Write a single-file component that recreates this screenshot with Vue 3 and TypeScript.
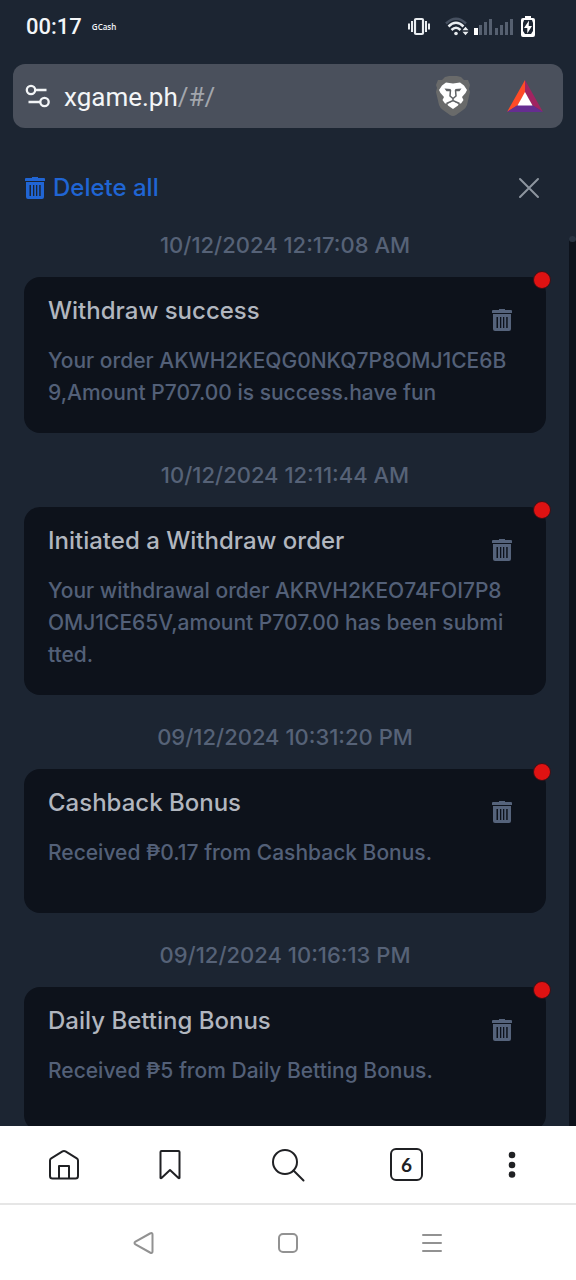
<script setup lang="ts">
interface Notice {
  id: number
  time: string
  title: string
  lines: string[]
}

const notices: Notice[] = [
  {
    id: 1,
    time: '10/12/2024 12:17:08 AM',
    title: 'Withdraw success',
    lines: ['Your order AKWH2KEQG0NKQ7P8OMJ1CE6B', '9,Amount P707.00 is success.have fun'],
  },
  {
    id: 2,
    time: '10/12/2024 12:11:44 AM',
    title: 'Initiated a Withdraw order',
    lines: ['Your withdrawal order AKRVH2KEO74FOI7P8', 'OMJ1CE65V,amount P707.00 has been submi', 'tted.'],
  },
  {
    id: 3,
    time: '09/12/2024 10:31:20 PM',
    title: 'Cashback Bonus',
    lines: ['Received ₱0.17 from Cashback Bonus.'],
  },
  {
    id: 4,
    time: '09/12/2024 10:16:13 PM',
    title: 'Daily Betting Bonus',
    lines: ['Received ₱5 from Daily Betting Bonus.'],
  },
]
</script>

<template>
  <div class="screen">
    <header class="status">
      <time class="clock">00:17</time>
      <span class="carrier">GCash</span>
      <div class="status-icons">
        <svg class="vibrate" width="24" height="20" viewBox="0 0 24 20" fill="none" stroke="#e9edf0">
          <rect x="8" y="2" width="8" height="15" rx="1" stroke-width="2.200" />
          <path d="M5 4v11M19 4v11" stroke-width="2" />
          <path d="M2 6.500v6M22 6.500v6" stroke-width="2" />
        </svg>
        <svg width="24" height="20" viewBox="0 0 24 20" fill="none">
          <path d="M1 6.500Q11 -3 21 6.500" stroke="#465060" stroke-width="2.500" />
          <path d="M3.500 9.500Q11 2 18.500 9.500M6.500 13Q11 8.500 15.500 13" stroke="#e9edf0" stroke-width="2.500" />
          <circle cx="11" cy="16.500" r="1.800" fill="#e9edf0" />
          <path d="M17.500 13.200l3-3.400 3 3.400zM17.500 14.800l3 3.400 3-3.400z" fill="#e9edf0" />
        </svg>
        <svg width="42" height="20" viewBox="0 0 42 20" fill="#566070">
          <path d="M1 11h4v7H1z" fill="#fff" />
          <path d="M6 8h3v10H6zM11 5h3v13h-3zM16 2h3v16h-3zM22 11h3v7h-3zM27 8h3v10h-3zM32 5h3v13h-3zM37 2h3v16h-3z" />
        </svg>
        <svg class="battery" width="14" height="22" viewBox="0 0 14 22">
          <path d="M4 0h6v2h2q2 0 2 2v15q0 2-2 2H2q-2 0-2-2V4q0-2 2-2h2z" fill="#fff" />
          <path d="M3 4h8l1 3v8l-2 3H4l-2-3V7z" fill="#1c2532" />
          <path d="M8 4.500L3 12h3.300v5.500L11 10H7.700z" fill="#fff" />
        </svg>
      </div>
    </header>

    <nav class="address" aria-label="Address">
      <button class="icon-button" type="button" aria-label="Site settings">
        <svg width="26" height="24" viewBox="0 0 26 24" fill="none" stroke="#f3f5f7" stroke-width="2.300">
          <circle cx="6" cy="6" r="4.200" />
          <path d="M10.500 6h11M3.500 18H15" />
          <circle cx="19.500" cy="18" r="4.200" />
        </svg>
      </button>
      <a class="url" href="#/">xgame.ph<span class="path">/#/</span></a>
      <button class="icon-button shields" type="button" aria-label="Shields">
        <svg width="36" height="42" viewBox="0 0 36 42">
          <path d="M10 2l4-1h8l4 1 3 3 4 0 2 5-1 4 1 3-3 13q-1 3-4 5l-7 5q-3 2-6 0l-7-5q-3-2-4-5L1 17l1-4-1-3 2-5h4z" fill="#696a6a" />
          <path d="M11 7.500l7 1 7-1 4 3 3 4.500-1.500 3-3.500 4 1.500 3-2.500 3.500h-3l-5-2.500-5 2.500h-3L7.500 25 9 22l-3.500-4L4 15l3-4.500z" fill="#fff" />
          <path d="M12.500 29l5.500-3 5.500 3-.5 1.500-5 3.500-5-3.500z" fill="#fff" />
          <path d="M9.500 13.500l6.500.5-1 2.200h-3.500zM26.500 13.500l-6.500.5 1 2.200h3.500z" fill="#5f6265" />
          <path d="M15.500 15l-.5 6 3 2.500 3-2.500-.5-6M18 23.500V26M11.500 28.500l6.500-3 6.500 3" fill="none" stroke="#5f6265" stroke-width="1.500" />
        </svg>
      </button>
      <button class="icon-button" type="button" aria-label="Rewards">
        <svg width="36" height="32" viewBox="0 0 36 32">
          <path d="M18 0v13l-7 12L0 32z" fill="#ff4b27" />
          <path d="M18 0l18 32-11-7-7-12z" fill="#a12461" />
          <path d="M0 32l11-7h14l11 7z" fill="#662d91" />
          <path d="M18 12l7.500 13.500h-15z" fill="#fff" />
        </svg>
      </button>
    </nav>

    <main class="panel">
      <div class="toolbar">
        <button class="delete-all" type="button">
          <svg width="20" height="24" viewBox="0 0 20 24">
            <path d="M7 1h6v1h6q1 0 1 1v2H0V3q0-1 1-1h6z" />
            <path fill-rule="evenodd" d="M1 6h18v15q0 2-2 2H3q-2 0-2-2zM4.500 9v11H6V9zM8 9v11h1.300V9zM11 9v11h1.300V9zM14.200 9v11h1.500V9z" />
          </svg>
          Delete all
        </button>
        <button class="close" type="button" aria-label="Close">
          <svg width="22" height="22" viewBox="0 0 22 22" fill="none" stroke="#8d959f" stroke-width="2" stroke-linecap="round">
            <path d="M2 2l18 18M20 2L2 20" />
          </svg>
        </button>
      </div>

      <div class="feed">
        <ul class="notices">
          <li v-for="notice in notices" :key="notice.id" class="notice">
            <time class="date">{{ notice.time }}</time>
            <article class="card">
              <span class="unread"></span>
              <div class="body">
                <h2 class="title">{{ notice.title }}</h2>
                <p class="text">{{ notice.lines.join('\n') }}</p>
              </div>
              <button class="remove" type="button" :aria-label="`Delete ${notice.title}`">
                <svg width="20" height="24" viewBox="0 0 20 24">
                  <path d="M7 1h6v1h6q1 0 1 1v2H0V3q0-1 1-1h6z" />
                  <path fill-rule="evenodd" d="M1 6h18v15q0 2-2 2H3q-2 0-2-2zM4.500 9v11H6V9zM8 9v11h1.300V9zM11 9v11h1.300V9zM14.200 9v11h1.500V9z" />
                </svg>
              </button>
            </article>
          </li>
        </ul>
        <div class="track"><span class="thumb"></span></div>
      </div>
    </main>

    <nav class="browser-bar" aria-label="Browser">
      <button type="button" aria-label="Home">
        <svg width="34" height="34" viewBox="0 0 34 34">
          <path d="M3 12.500q0-1.500 1.200-2.200L15.500 3.400q1.500-.9 3 0l11.300 6.900q1.200.7 1.200 2.200V28q0 2.500-2.500 2.500h-23Q3 30.500 3 28zM12 30V18h10v12" />
        </svg>
      </button>
      <button type="button" aria-label="Bookmarks">
        <svg width="24" height="34" viewBox="0 0 24 34">
          <path d="M2.500 4q0-1 1-1h17q1 0 1 1v26q-.5.7-1 0L12 22l-8.500 8q-.5.700-1 0z" />
        </svg>
      </button>
      <button type="button" aria-label="Search">
        <svg width="34" height="34" viewBox="0 0 34 34">
          <circle cx="14" cy="14" r="12" />
          <path d="M22.500 22.500l10 10" />
        </svg>
      </button>
      <button type="button" aria-label="6 open tabs"><span class="tabs">6</span></button>
      <button type="button" aria-label="More">
        <svg class="dots" width="10" height="28" viewBox="0 0 10 28">
          <circle cx="5" cy="4" r="3.300" /><circle cx="5" cy="14" r="3.300" /><circle cx="5" cy="23.500" r="3.300" />
        </svg>
      </button>
    </nav>

    <nav class="system-bar" aria-label="System">
      <button type="button" aria-label="Back">
        <svg width="22" height="24" viewBox="0 0 22 24">
          <path d="M17 2.500Q19.500 1.200 19.500 3.500v17q0 2.300-2.500 1L2.500 13.500q-2-1.500 0-3z" />
        </svg>
      </button>
      <button type="button" aria-label="Overview">
        <svg width="22" height="22" viewBox="0 0 22 22"><rect x="2" y="2" width="18" height="18" rx="4" /></svg>
      </button>
      <button type="button" aria-label="Menu">
        <svg width="22" height="22" viewBox="0 0 22 22"><path d="M2 3h18M2 11h18M2 19h18" /></svg>
      </button>
    </nav>
  </div>
</template>

<style>
body {
  margin: 0;
  background: #1c2532;
}
</style>

<style scoped>
* {
  box-sizing: border-box;
}

.screen {
  display: flex;
  flex-direction: column;
  height: 100vh;
  background: #1c2532;
  font-family: Inter, "Noto Sans", sans-serif;
}

button {
  display: flex;
  flex: none;
  align-items: center;
  justify-content: center;
  padding: 0;
  border: 0;
  background: none;
  color: inherit;
  font: inherit;
  cursor: pointer;
}

svg {
  display: block;
  flex: none;
}

.status {
  display: flex;
  flex: none;
  align-items: center;
  height: 54px;
  padding: 0 41px 0 26px;
  color: #f3f6f8;
}

.clock {
  font: 500 22px/28px Roboto, sans-serif;
}

.carrier {
  margin-left: 10px;
  font: 600 8px/12px "Open Sans", sans-serif;
}

.status-icons {
  display: flex;
  align-items: center;
  margin-left: auto;
}

.vibrate {
  margin-right: 14px;
}

.status-icons svg + svg + svg {
  margin-left: 4px;
}

.status-icons .battery {
  margin-left: 6px;
}

.address {
  display: flex;
  flex: none;
  align-items: center;
  height: 64px;
  margin: 10px 13px 0;
  padding: 0 20px 0 12px;
  border-radius: 12px;
  background: #4a505c;
}

.url {
  margin-left: 13px;
  padding-top: 2px;
  color: #f3f5f7;
  font: 400 26px/32px Roboto, sans-serif;
  text-decoration: none;
}

.path {
  color: #a2a6ad;
}

.shields {
  margin-right: 36px;
  margin-left: auto;
}

.panel {
  display: flex;
  flex: 1;
  flex-direction: column;
  min-height: 0;
}

.toolbar {
  display: flex;
  flex: none;
  align-items: center;
  justify-content: space-between;
  padding: 44px 36px 25px 25px;
}

.delete-all {
  gap: 8px;
  color: #2065d4;
  fill: #2065d4;
  font-size: 24px;
  font-weight: 500;
  line-height: 32px;
}

.feed {
  display: flex;
  flex: 1;
  min-height: 0;
  overflow: hidden;
}

.notices {
  flex: 1;
  min-width: 0;
  margin: 0;
  padding: 0 23px 0 24px;
  list-style: none;
}

.notice {
  display: flex;
  flex-direction: column;
  gap: 16px;
  margin-bottom: 26px;
}

.date {
  color: #566277;
  font-size: 22px;
  font-weight: 500;
  line-height: 32px;
  text-align: center;
}

.card {
  position: relative;
  display: flex;
  min-height: 144px;
  padding: 16px 34px 24px 24px;
  border-radius: 16px;
  background: #0d121b;
}

.body {
  flex: 1;
  min-width: 0;
}

.title {
  margin: 0 0 16px;
  color: #b1b6bf;
  font-size: 24px;
  font-weight: 500;
  line-height: 36px;
}

.text {
  margin: 0;
  color: #536078;
  font-size: 21px;
  font-weight: 500;
  line-height: 32px;
  white-space: pre;
}

.remove {
  align-self: flex-start;
  margin-top: 15px;
  fill: #55637b;
}

.unread {
  position: absolute;
  top: -6px;
  right: -5px;
  width: 18px;
  height: 18px;
  border: 1px solid #3a1018;
  border-radius: 50%;
  background: #df1212;
}

.track {
  flex: none;
  width: 7px;
  margin-top: 7px;
  border-radius: 4px 4px 0 0;
  background: #0d121b;
}

.thumb {
  display: block;
  height: 6px;
  border-radius: 3px;
  background: #293341;
}

.browser-bar {
  display: grid;
  flex: none;
  grid-template-columns: 104fr 107fr 130fr 107fr 104fr;
  align-items: center;
  height: 79px;
  padding: 0 12px;
  border-bottom: 2px solid #e6e6e6;
  background: #fff;
  color: #202124;
}

.browser-bar svg {
  fill: none;
  stroke: #202124;
  stroke-width: 2;
  stroke-linejoin: round;
  stroke-linecap: round;
}

.browser-bar .dots {
  fill: #202124;
  stroke: none;
}

.tabs {
  width: 33px;
  height: 33px;
  border: 2px solid #202124;
  border-radius: 6px;
  font: 700 19px/29px Lato, sans-serif;
}

.system-bar {
  display: flex;
  flex: none;
  align-items: center;
  justify-content: space-around;
  height: 75px;
  padding: 0 72px;
  background: #fff;
}

.system-bar svg {
  fill: none;
  stroke: #929292;
  stroke-width: 2;
  stroke-linecap: round;
}
</style>
